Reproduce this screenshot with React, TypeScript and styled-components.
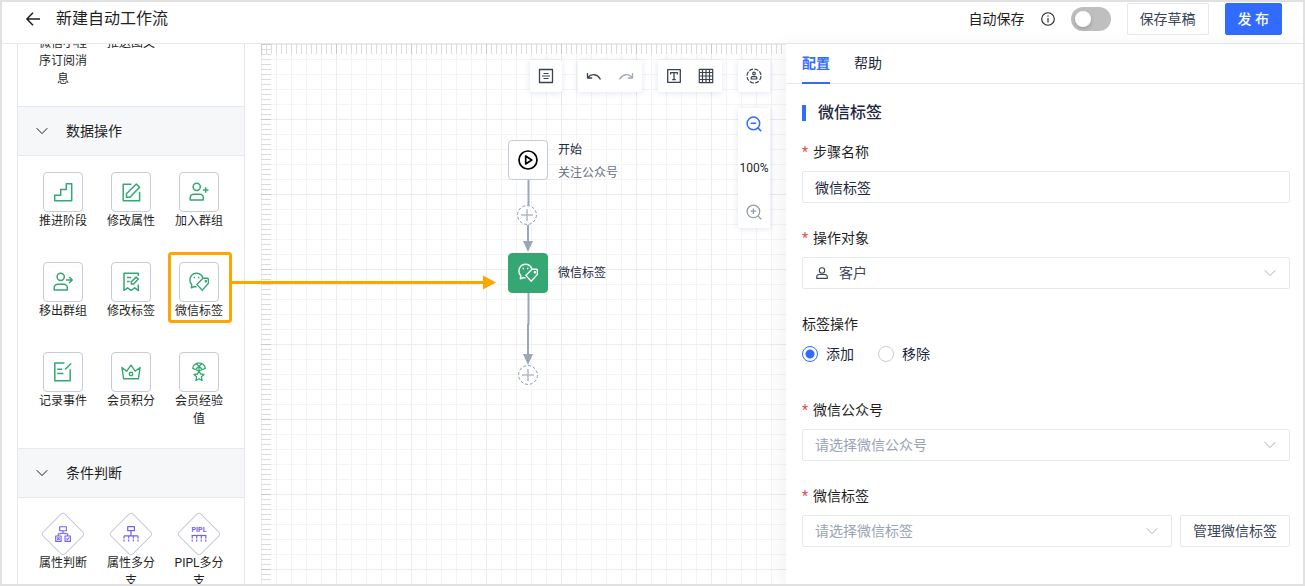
import React, { useLayoutEffect, useRef } from "react";
import styled, { createGlobalStyle } from "styled-components";

const blue = "#326bff";
const green = "#35a772";
const orange = "#ffa500";
const line = "#e6e8ef";
const ink = "#1f1f1f";
const navy = "#1d2740";
const slate = "#9ca7b5";

const GlobalStyle = createGlobalStyle`
  *, *::before, *::after { box-sizing: border-box; }
  html, body, #root { height: 100%; }
  body {
    margin: 0;
    background: #fff;
    color: ${ink};
    font-family: Roboto, "Noto Sans CJK SC", sans-serif;
    font-size: 14px;
    line-height: 22px;
  }
  button, input, select { font: inherit; color: inherit; margin: 0; }
  button { cursor: pointer; }
  svg { display: block; }
`;

/* ---------- frame ---------- */

const Frame = styled.div`
  display: flex;
  flex-direction: column;
  height: 100vh;
  border: 2px solid #e1e1e1;
  overflow: hidden;
`;

const Header = styled.header`
  display: flex;
  align-items: center;
  gap: 16px;
  padding: 1px 21px 8px 24px;
  border-bottom: 1px solid #e8e8ec;
`;

const BackButton = styled.button`
  padding: 0;
  border: 0;
  background: none;
`;

const PageTitle = styled.h1`
  flex: 1;
  margin: 0;
  font-size: 16px;
  line-height: 24px;
  font-weight: 400;
`;

const AutoSave = styled.div`
  display: flex;
  align-items: center;
  gap: 16px;
`;

const Toggle = styled.input`
  appearance: none;
  display: flex;
  align-items: center;
  width: 40px;
  height: 24px;
  padding: 4px;
  border-radius: 12px;
  background: #bfbfbf;

  &::before {
    content: "";
    width: 16px;
    height: 16px;
    border-radius: 50%;
    background: #fff;
    box-shadow: 0 2px 4px rgba(0, 35, 11, 0.2);
  }
  &:checked {
    justify-content: flex-end;
    background: ${blue};
  }
`;

const Button = styled.button<{ $primary?: boolean }>`
  flex: none;
  height: 32px;
  padding: 0 12px;
  border: 1px solid ${(p) => (p.$primary ? blue : line)};
  border-radius: 2px;
  background: ${(p) => (p.$primary ? blue : "#fff")};
  color: ${(p) => (p.$primary ? "#fff" : "#3b4559")};
  font-weight: ${(p) => (p.$primary ? 500 : 400)};
  line-height: 22px;
`;

const Body = styled.main`
  position: relative;
  flex: 1;
  min-height: 0;
  display: flex;
`;

/* ---------- component library ---------- */

const Sidebar = styled.aside`
  flex: none;
  width: 228px;
  margin: 0 16px 0 15px;
  border: solid ${line};
  border-width: 0 1px;
  overflow-y: auto;
  scrollbar-width: none;
`;

const SectionHead = styled.button`
  display: flex;
  align-items: center;
  gap: 18px;
  width: 100%;
  height: 50px;
  padding: 0 18px;
  border: solid ${line};
  border-width: 1px 0;
  background: #f6f7f9;
  text-align: left;
`;

const Tools = styled.div<{ $compact?: boolean }>`
  display: grid;
  grid-template-columns: repeat(3, 52px);
  justify-content: center;
  gap: 16px;
  padding: 16px 0 ${(p) => (p.$compact ? 18 : 20)}px;
`;

const Tool = styled.button`
  display: flex;
  flex-direction: column;
  align-items: center;
  min-height: 74px;
  padding: 0;
  border: 0;
  background: none;
  font-size: 12px;
  line-height: 18px;
`;

const ToolBox = styled.span`
  display: flex;
  align-items: center;
  justify-content: center;
  width: 40px;
  height: 40px;
  border: 1px solid #c6cbda;
  border-radius: 4px;
  background: #fff;
  color: ${green};
`;

const Diamond = styled.span`
  display: grid;
  place-items: center;
  width: 40px;
  height: 40px;
  color: #7360f2;

  &::before {
    content: "";
    grid-area: 1 / 1;
    width: 32px;
    height: 32px;
    border: 1px solid #c6cbda;
    border-radius: 4px;
    transform: rotate(45deg);
  }
  svg { grid-area: 1 / 1; }
`;

/* ---------- canvas ---------- */

const Canvas = styled.section`
  position: relative;
  flex: 1;
  min-width: 0;
  overflow: hidden;
  background:
    linear-gradient(to right, #c9c9c9 1px, transparent 1px) 0 0 / 75px 10px repeat-x,
    linear-gradient(to bottom, #c9c9c9 1px, transparent 1px) 0 0 / 10px 75px repeat-y,
    linear-gradient(to right, #dcdcdc 1px, transparent 1px) 0 0 / 5px 10px repeat-x,
    linear-gradient(to bottom, #dcdcdc 1px, transparent 1px) 0 0 / 10px 5px repeat-y,
    linear-gradient(to right, #ececec 1px, transparent 1px) 0 0 / 75px 75px,
    linear-gradient(to bottom, #ececec 1px, transparent 1px) 0 0 / 75px 75px,
    linear-gradient(to right, #f4f4f4 1px, transparent 1px) 0 0 / 15px 15px,
    linear-gradient(to bottom, #f4f4f4 1px, transparent 1px) 0 0 / 15px 15px,
    #fff;
`;

const Toolbar = styled.div`
  position: absolute;
  top: 16px;
  right: 16px;
  display: flex;
  align-items: flex-start;
  gap: 16px;
`;

const ToolColumn = styled.div`
  display: flex;
  flex-direction: column;
  gap: 16px;
`;

const ToolGroup = styled.div<{ $vertical?: boolean }>`
  display: flex;
  flex-direction: ${(p) => (p.$vertical ? "column" : "row")};
  align-items: center;
  justify-content: space-between;
  height: ${(p) => (p.$vertical ? "120px" : "32px")};
  border-radius: 2px;
  background: #fff;
  box-shadow: 0 1px 6px rgba(60, 70, 160, 0.14);
`;

const IconButton = styled.button<{ $color?: string }>`
  display: grid;
  place-items: center;
  width: 32px;
  height: 32px;
  padding: 0;
  border: 0;
  background: none;
  color: ${(p) => p.$color || "#39434f"};
`;

const ZoomValue = styled.span`
  font-size: 12px;
  line-height: 18px;
`;

const Flow = styled.svg`
  position: absolute;
  left: 0;
  top: 0;
`;

const Node = styled.div<{ $x: number; $y: number }>`
  position: absolute;
  left: ${(p) => p.$x}px;
  top: ${(p) => p.$y}px;
  display: flex;
  gap: 10px;
  color: ${navy};
  font-size: 12px;
  line-height: 18px;
`;

const NodeBox = styled.button<{ $filled?: boolean }>`
  display: grid;
  place-items: center;
  width: 40px;
  height: 40px;
  padding: 0;
  border: 1px solid ${(p) => (p.$filled ? green : "#c6cbda")};
  border-radius: 4px;
  background: ${(p) => (p.$filled ? green : "#fff")};
  color: ${(p) => (p.$filled ? "#fff" : "#000")};
`;

const NodeText = styled.div<{ $single?: boolean }>`
  display: flex;
  flex-direction: column;
  gap: 5px;
  padding-top: ${(p) => (p.$single ? 0 : 1)}px;
  align-self: ${(p) => (p.$single ? "center" : "flex-start")};
`;

const NodeSub = styled.span`
  color: #68707f;
`;

const AddStep = styled.button<{ $x: number; $y: number }>`
  position: absolute;
  left: ${(p) => p.$x}px;
  top: ${(p) => p.$y}px;
  padding: 0;
  border: 0;
  border-radius: 50%;
  background: #fff;
`;

const Callout = styled.svg`
  position: absolute;
  left: 166px;
  top: 208px;
  pointer-events: none;
`;

/* ---------- settings panel ---------- */

const Panel = styled.aside`
  position: relative;
  flex: none;
  width: 517px;
  background: #fff;
  box-shadow: -6px 0 16px rgba(0, 0, 0, 0.05);
`;

const Tabs = styled.div`
  display: flex;
  gap: 24px;
  height: 40px;
  padding: 0 16px;
  border-bottom: 1px solid #e8e8ec;
`;

const Tab = styled.button<{ $active?: boolean }>`
  height: 40px;
  padding: 0;
  border: 0;
  border-bottom: 2px solid ${(p) => (p.$active ? blue : "transparent")};
  background: none;
  color: ${(p) => (p.$active ? blue : navy)};
  font-weight: ${(p) => (p.$active ? 700 : 400)};
`;

const Form = styled.form`
  padding: 17px 13px 0 16px;
`;

const FormTitle = styled.h2`
  display: flex;
  align-items: center;
  gap: 12px;
  margin: 0 0 16px;
  color: ${navy};
  font-size: 16px;
  line-height: 24px;
  font-weight: 500;

  &::before {
    content: "";
    width: 4px;
    height: 16px;
    background: ${blue};
  }
`;

const Field = styled.div`
  display: flex;
  flex-direction: column;
  gap: 8px;
  min-height: 86px;
`;

const Label = styled.label<{ $required?: boolean }>`
  display: flex;
  gap: 5px;

  &::before {
    content: "*";
    display: ${(p) => (p.$required ? "block" : "none")};
    color: #e5484d;
  }
`;

const TextInput = styled.input`
  width: 100%;
  height: 32px;
  padding: 0 12px;
  border: 1px solid ${line};
  border-radius: 2px;
  background: #fff;
  color: ${navy};
`;

const SelectWrap = styled.div`
  position: relative;
  flex: 1;
  min-width: 0;
  max-height: 32px;
`;

const Select = styled.select<{ $icon?: boolean; $placeholder?: boolean }>`
  appearance: none;
  display: block;
  width: 100%;
  height: 32px;
  padding: 0 36px;
  padding-left: ${(p) => (p.$icon ? 36 : 12)}px;
  border: 1px solid ${line};
  border-radius: 2px;
  background: transparent;
  color: ${(p) => (p.$placeholder ? "#9aa3b5" : "#3b4559")};
`;

const SelectIcon = styled.span<{ $side: "left" | "right" }>`
  position: absolute;
  ${(p) => p.$side}: 14px;
  top: 10px;
  color: ${(p) => (p.$side === "left" ? "#3b4559" : "#a8afbf")};
  pointer-events: none;
`;

const Row = styled.div`
  display: flex;
  gap: 8px;
`;

const Radios = styled.div`
  display: flex;
  gap: 24px;
`;

const RadioLabel = styled.label`
  display: flex;
  align-items: center;
  gap: 8px;
  color: ${navy};
`;

const Radio = styled.input`
  appearance: none;
  width: 16px;
  height: 16px;
  border: 1px solid #c9cdd8;
  border-radius: 50%;
  background: #fff;

  &:checked {
    border-color: ${blue};
    background: radial-gradient(circle, ${blue} 4px, transparent 5px);
  }
`;

/* ---------- icons ---------- */

type IconProps = { size?: number; w?: number; children: React.ReactNode };
const Icon = ({ size = 20, w = 1.3, children }: IconProps) => (
  <svg
    width={size}
    height={size}
    viewBox={`0 0 ${size} ${size}`}
    fill="none"
    stroke="currentColor"
    strokeWidth={w}
    strokeLinejoin="round"
    aria-hidden="true"
  >
    {children}
  </svg>
);

const Chevron = () => (
  <Icon size={12} w={1}>
    <path d="M.7 3.2 6 8.600l5.300-5.400" />
  </Icon>
);

const UserShape = () => (
  <>
    <circle cx="7.7" cy="4.8" r="3.6" />
    <path d="M1.2 18v-2.3A3.4 3.4 0 0 1 4.6 12.3h6.3a3.4 3.4 0 0 1 3.4 3.4V18z" />
  </>
);

const WechatTag = () => (
  <Icon w={1.4}>
    <path d="M13.9 5.9C12.8 3 10.2 1.3 7.3 1.3 3.5 1.3.9 4.3.9 7.9c0 2 .6 3.5 1.8 4.7L2.4 15.8l2.9-1.3c.8.3 1.6.3 2.3.2" />
    <path d="M14 6.3h4.3c.7 0 1.1.4 1.1 1.1v4l-6.2 6.9-5.400-5.900z" />
    <path d="M5.3 4.8v1.4M9.7 4.8v1.4M16.4 8.8h.9v.9h-.9z" />
  </Icon>
);

const toolIcons = {
  stairs: (
    <Icon w={1.5}>
      <path d="M1.7 18.7v-5.4h6V7.500h5.600V1.700h5.400v17z" />
    </Icon>
  ),
  edit: (
    <Icon w={1.5}>
      <path d="M10.5 2.3H2.2v16.4h16.4V9.8" />
      <path d="M5.5 15.3v-3.6L15.3 2l3.3 3.3-9.700 10z" />
    </Icon>
  ),
  join: (
    <Icon w={1.5}>
      <UserShape />
      <path d="M16.7 5.2v5.6M13.9 8h5.6" />
    </Icon>
  ),
  leave: (
    <Icon w={1.5}>
      <UserShape />
      <path d="M13 8h6M16.2 5l3 3-3 3" />
    </Icon>
  ),
  tag: (
    <Icon w={1.5}>
      <path d="M17.3 4V1.200H3v17.300l3.600-2.700 3.500 2.700 3.600-2.700 3.600 2.700V12.500" />
      <path d="M6 5.600h4M6 9.600h2.700" />
      <path d="M10.300 12v-2.200l4.800-4.700 2.200 2-4.700 4.900z" />
    </Icon>
  ),
  wechat: <WechatTag />,
  record: (
    <Icon w={1.5}>
      <path d="M11.5 1H1.800v17.800h15.400V7.200M12 7.500l6.200-6M4.200 7.200H9M4.200 11.500h6.200" />
    </Icon>
  ),
  crown: (
    <Icon w={1.4}>
      <path d="M.9 5.500l4.900 3.700L10 3.200l4.200 6 4.900-3.700-1.700 11.200H2.600z" />
      <circle cx="10" cy="12" r="1.700" />
    </Icon>
  ),
  medal: (
    <Icon w={1.3}>
      <path d="M3.700 6.300C4.200 3 7 1.100 10 1.100S15.800 3 16.300 6.300l-2.800 1.200-3.500 1.300-3.500-1.300z" />
      <path d="M7.200 1.800l6 5.400M12.800 1.800l-6 5.400M10 4.200v4.800" />
      <path d="M10 8.800l1.500 3.200 3.500.4-2.600 2.400.7 3.700-3.100-1.800-3.100 1.800.7-3.700L5 12.400l3.500-.4z" />
    </Icon>
  ),
};

const diamondIcons = {
  branch: (
    <Icon w={1.1}>
      <path d="M6.700 2.700h6.700v4H6.700zM10 6.700v2.500M8 9.200h4M5.300 12V9.800H8V8.700M14.700 12V9.800H12V8.700" />
      <path d="M2.700 12h5.400v5.400H2.700zM12 12h5.400v5.400H12zM4.200 13.500l2.400 2.400M6.600 13.500l-2.400 2.400M13.400 14.700l1 1 1.800-2.200" />
    </Icon>
  ),
  multi: (
    <Icon w={1.2}>
      <path d="M6.700 2.700h6.700v4H6.700zM10 6.700v4.800M3 11.800h14" />
      <path d="M3 12v5.500M7.700 12v5.500M12.300 12v5.500M17 12v5.500" strokeDasharray="2.500 1 2 1" />
    </Icon>
  ),
  pipl: (
    <Icon w={1.2}>
      <text
        x="10"
        y="8"
        fill="currentColor"
        stroke="none"
        fontFamily="Roboto, sans-serif"
        fontSize="7"
        fontWeight="700"
        textAnchor="middle"
      >
        PIPL
      </text>
      <path d="M2.700 11.500h14.600" />
      <path d="M3.200 11.500v6M7.700 11.500v6M12.300 11.500v6M16.800 11.500v6" strokeDasharray="3 1 2 1" />
    </Icon>
  ),
};

const AddGlyph = () => (
  <svg width="20" height="20" viewBox="0 0 20 20" fill="none" aria-hidden="true">
    <circle cx="10" cy="10" r="9.400" stroke="#8e99ab" strokeDasharray="3 1.900" />
    <path d="M4 10h12M10 4v12" stroke="#b3bac6" strokeWidth="1.500" />
  </svg>
);

/* ---------- data ---------- */

type ToolEntry = { label: string; icon?: React.ReactNode; diamond?: boolean };
type SectionEntry = { title?: string; tools: ToolEntry[] };

const sections: SectionEntry[] = [
  {
    tools: [
      { label: "微信小程序订阅消息", icon: toolIcons.record },
      { label: "推送图文", icon: toolIcons.edit },
    ],
  },
  {
    title: "数据操作",
    tools: [
      { label: "推进阶段", icon: toolIcons.stairs },
      { label: "修改属性", icon: toolIcons.edit },
      { label: "加入群组", icon: toolIcons.join },
      { label: "移出群组", icon: toolIcons.leave },
      { label: "修改标签", icon: toolIcons.tag },
      { label: "微信标签", icon: toolIcons.wechat },
      { label: "记录事件", icon: toolIcons.record },
      { label: "会员积分", icon: toolIcons.crown },
      { label: "会员经验值", icon: toolIcons.medal },
    ],
  },
  {
    title: "条件判断",
    tools: [
      { label: "属性判断", icon: diamondIcons.branch, diamond: true },
      { label: "属性多分支", icon: diamondIcons.multi, diamond: true },
      { label: "PIPL多分支", icon: diamondIcons.pipl, diamond: true },
    ],
  },
];

const Library = () => {
  const list = useRef<HTMLElement>(null);
  useLayoutEffect(() => {
    if (list.current) list.current.scrollTop = 66;
  }, []);
  return (
    <Sidebar ref={list}>
      {sections.map((s, i) => (
        <section key={i}>
          {s.title && (
            <SectionHead type="button" aria-expanded="true">
              <Chevron />
              {s.title}
            </SectionHead>
          )}
          <Tools $compact={!s.title}>
            {s.tools.map((t) => (
              <Tool key={t.label} type="button">
                {t.diamond ? <Diamond>{t.icon}</Diamond> : <ToolBox>{t.icon}</ToolBox>}
                {t.label}
              </Tool>
            ))}
          </Tools>
        </section>
      ))}
    </Sidebar>
  );
};

const Workflow = () => (
  <Canvas aria-label="工作流画布">
    <Flow width="400" height="360" viewBox="0 0 400 360" aria-hidden="true">
      <path d="M267.500 136v30M267 180v24M267.500 249v32M267 280v35" stroke={slate} strokeWidth="2" />
      <path d="M262 197h10l-5 11zM262 310h10l-5 11z" fill={slate} />
    </Flow>
    <Node $x={247} $y={96}>
      <NodeBox type="button" aria-label="开始">
        <Icon w={1.7}>
          <circle cx="10" cy="10" r="9" />
          <path d="M7.700 6v8l6-4z" />
        </Icon>
      </NodeBox>
      <NodeText>
        <span>开始</span>
        <NodeSub>关注公众号</NodeSub>
      </NodeText>
    </Node>
    <AddStep type="button" aria-label="添加步骤" $x={256} $y={161}>
      <AddGlyph />
    </AddStep>
    <Node $x={247} $y={209}>
      <NodeBox type="button" $filled aria-label="微信标签">
        <WechatTag />
      </NodeBox>
      <NodeText $single>
        <span>微信标签</span>
      </NodeText>
    </Node>
    <AddStep type="button" aria-label="添加步骤" $x={257} $y={321}>
      <AddGlyph />
    </AddStep>

    <Toolbar>
      <ToolGroup>
        <IconButton type="button" aria-label="备注">
          <Icon size={16} w={1}>
            <path d="M1.500 1.500h13v13h-13z" strokeWidth="1.300" />
            <path d="M5.500 5.500h5M4 8h8M5.500 10.500h5" />
          </Icon>
        </IconButton>
      </ToolGroup>
      <ToolGroup>
        <IconButton type="button" aria-label="撤销">
          <Icon size={16}>
            <path d="M1.500 5v5h4.700M1.700 9.700C5.300 5.300 11.300 5.600 14.500 11.500" />
          </Icon>
        </IconButton>
        <IconButton type="button" aria-label="重做" $color="#a3abbb">
          <Icon size={16}>
            <path d="M14.500 5v5H9.800M14.300 9.700C10.700 5.300 4.700 5.600 1.500 11.500" />
          </Icon>
        </IconButton>
      </ToolGroup>
      <ToolGroup>
        <IconButton type="button" aria-label="文本">
          <Icon size={16}>
            <path d="M1.700 1.700h12.600v12.600H1.700zM4.600 6.500V4.700h6.800v1.800M8 4.700v6.900M6.200 11.600h3.600" />
          </Icon>
        </IconButton>
        <IconButton type="button" aria-label="网格">
          <Icon size={16} w={1.2}>
            <path d="M1.300 1.300h13.400v13.400H1.300zM4.500 1v14M8 1v14M11.500 1v14M1 4.500h14M1 8h14M1 11.500h14" />
          </Icon>
        </IconButton>
      </ToolGroup>
      <ToolColumn>
        <ToolGroup>
          <IconButton type="button" aria-label="人群">
            <Icon size={16} w={1.2}>
              <circle cx="8" cy="8" r="7" strokeDasharray="4.500 1.300 3.900 1.300" />
              <circle cx="8" cy="5.500" r="1.300" />
              <path d="M5.200 11V9.900c0-.7.500-1.200 1.200-1.200h3.200c.7 0 1.200.5 1.200 1.200V11z" />
            </Icon>
          </IconButton>
        </ToolGroup>
        <ToolGroup $vertical>
          <IconButton type="button" aria-label="缩小" $color={blue}>
            <Icon size={16} w={1.5}>
              <circle cx="7.400" cy="7.400" r="6.300" />
              <path d="M4.600 7.200h5.600M11.900 11.900l3.300 3.300" />
            </Icon>
          </IconButton>
          <ZoomValue>100%</ZoomValue>
          <IconButton type="button" aria-label="放大" $color="#929bab">
            <Icon size={16} w={1.3}>
              <circle cx="7.400" cy="7.400" r="6.300" />
              <path d="M4.600 7.200h5.600M7.400 4.400v5.600M11.900 11.900l3.300 3.300" />
            </Icon>
          </IconButton>
        </ToolGroup>
      </ToolColumn>
    </Toolbar>
  </Canvas>
);

const Settings = () => (
  <Panel>
    <Tabs role="tablist">
      <Tab type="button" role="tab" aria-selected="true" $active>
        配置
      </Tab>
      <Tab type="button" role="tab" aria-selected="false">
        帮助
      </Tab>
    </Tabs>
    <Form>
      <FormTitle>微信标签</FormTitle>
      <Field>
        <Label $required htmlFor="step-name">步骤名称</Label>
        <TextInput id="step-name" defaultValue="微信标签" />
      </Field>
      <Field>
        <Label $required htmlFor="target">操作对象</Label>
        <SelectWrap>
          <Select id="target" $icon>
            <option>客户</option>
          </Select>
          <SelectIcon $side="left">
            <Icon size={12} w={1.1}>
              <circle cx="6" cy="3.500" r="2.700" />
              <path d="M.7 11.400V10c0-1.500 1-2.500 2.500-2.500h5.600c1.500 0 2.500 1 2.500 2.500v1.400z" />
            </Icon>
          </SelectIcon>
          <SelectIcon $side="right"><Chevron /></SelectIcon>
        </SelectWrap>
      </Field>
      <Field role="radiogroup" aria-labelledby="tag-action">
        <Label as="span" id="tag-action">标签操作</Label>
        <Radios>
          <RadioLabel>
            <Radio type="radio" name="tag-action" defaultChecked />
            添加
          </RadioLabel>
          <RadioLabel>
            <Radio type="radio" name="tag-action" />
            移除
          </RadioLabel>
        </Radios>
      </Field>
      <Field>
        <Label $required htmlFor="account">微信公众号</Label>
        <SelectWrap>
          <Select id="account" $placeholder>
            <option>请选择微信公众号</option>
          </Select>
          <SelectIcon $side="right"><Chevron /></SelectIcon>
        </SelectWrap>
      </Field>
      <Field>
        <Label $required htmlFor="wechat-tag">微信标签</Label>
        <Row>
          <SelectWrap>
            <Select id="wechat-tag" $placeholder>
              <option>请选择微信标签</option>
            </Select>
            <SelectIcon $side="right"><Chevron /></SelectIcon>
          </SelectWrap>
          <Button type="button">管理微信标签</Button>
        </Row>
      </Field>
    </Form>
  </Panel>
);

export default function App() {
  return (
    <>
      <GlobalStyle />
      <Frame>
        <Header>
          <BackButton type="button" aria-label="返回">
            <Icon size={14} w={1.5}>
              <path d="M14 7H1.200M7 .8.9 7 7 13.200" />
            </Icon>
          </BackButton>
          <PageTitle>新建自动工作流</PageTitle>
          <AutoSave>
            <label htmlFor="auto-save">自动保存</label>
            <Icon size={14} w={1.1}>
              <circle cx="7" cy="7" r="6.300" />
              <path d="M7 6v4.400M7 3.500v1.300" />
            </Icon>
            <Toggle id="auto-save" type="checkbox" role="switch" />
          </AutoSave>
          <Button type="button">保存草稿</Button>
          <Button type="button" $primary>发 布</Button>
        </Header>
        <Body>
          <Library />
          <Workflow />
          <Settings />
          <Callout width="330" height="72" viewBox="0 0 330 72" aria-hidden="true">
            <rect x="1.500" y="1.500" width="61" height="68" rx="2" fill="none" stroke={orange} strokeWidth="3" />
            <path d="M64 30.500h252" stroke={orange} strokeWidth="3" />
            <path d="M315 23.500l13 7-13 7z" fill={orange} />
          </Callout>
        </Body>
      </Frame>
    </>
  );
}
